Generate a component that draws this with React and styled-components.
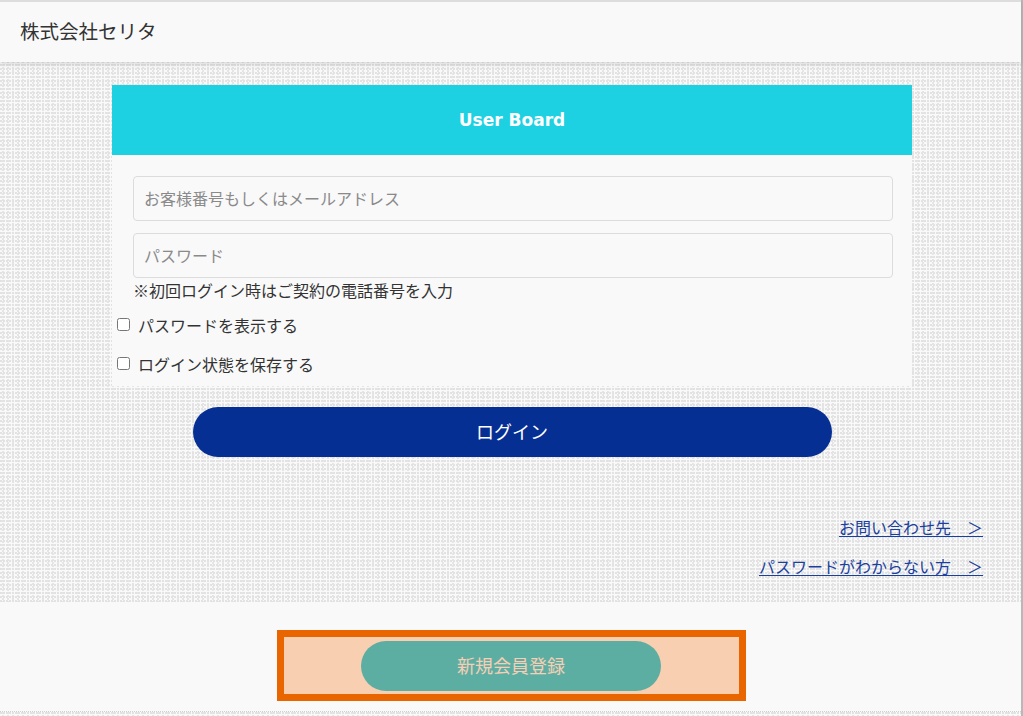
import React from "react";
import styled, { createGlobalStyle } from "styled-components";

const GlobalStyle = createGlobalStyle`
  * { box-sizing: border-box; }
  html, body { margin: 0; padding: 0; }
  body {
    background-color: #f9f9f9;
    font-family: "Noto Sans CJK JP", "Noto Sans", sans-serif;
    color: #333;
  }
`;

const Page = styled.div`
  position: relative;
  min-height: 716px;
  background-color: #f9f9f9;
  background-image:
    radial-gradient(circle at 1px 1px, #e2e2e2 0.8px, transparent 1px),
    radial-gradient(circle at 1px 1px, #e5e5e5 0.8px, transparent 1px);
  background-size: 3px 4px, 5px 3px;
  background-position: 0 0, 2px 1px;
  box-shadow: inset -2px 0 0 #b8b8b8;
`;

const Header = styled.header`
  position: relative;
  z-index: 1;
  height: 62px;
  border-top: 2px solid #dddddd;
  background: #f9f9f9;
  box-shadow: 0 2px 5px rgba(0, 0, 0, 0.14);
  display: flex;
  align-items: center;
  padding: 0 0 4px 20px;
  font-size: 19.5px;
  color: #333;
  margin-right: 2px;
`;

const Main = styled.main`
  padding: 23px 0 24px 1px;
`;

const Card = styled.section`
  width: 800px;
  margin: 0 auto;
  background: #f9f9f9;
`;

const CardHead = styled.div`
  height: 70px;
  background: #1dd1e3;
  display: flex;
  align-items: center;
  justify-content: center;
  font-family: "DejaVu Sans", Verdana, sans-serif;
  font-weight: bold;
  font-size: 17px;
  color: #ffffff;
`;

const CardBody = styled.div`
  padding: 21px 0 3px;
`;

const Fields = styled.div`
  padding: 0 19px 0 21px;
  display: flex;
  flex-direction: column;
  gap: 12px;
`;

const Input = styled.input`
  height: 45px;
  width: 100%;
  border: 1px solid #dcdcdc;
  border-radius: 4px;
  background: #f9f9f9;
  padding: 0 10px 2px;
  font-family: "Noto Sans CJK JP", sans-serif;
  font-size: 16px;
  color: #333;
  outline: none;
  &::placeholder { color: #8a8a8a; }
`;

const Note = styled.p`
  margin: 0 21px;
  font-size: 16px;
  line-height: 24px;
  color: #333;
`;

const CheckList = styled.div`
  margin-top: 3px;
`;

const CheckRow = styled.label`
  height: 39px;
  display: flex;
  align-items: center;
  gap: 8px;
  padding-left: 5px;
  font-size: 16px;
  color: #333;
`;

const Check = styled.input`
  margin: 0;
  width: 13px;
  height: 13px;
`;

const PillButton = styled.button`
  display: flex;
  align-items: center;
  justify-content: center;
  width: ${(p) => p.$w}px;
  height: 50px;
  border: none;
  border-radius: 25px;
  background: ${(p) => p.$bg};
  color: ${(p) => p.$fg};
  font-family: "Noto Sans CJK JP", sans-serif;
  font-size: 18px;
  padding: 0 0 2px;
  cursor: pointer;
`;

const LoginWrap = styled.div`
  display: flex;
  justify-content: center;
  margin-top: 21px;
`;

const Links = styled.nav`
  margin-top: 58px;
  padding-right: 40px;
  display: flex;
  flex-direction: column;
  align-items: flex-end;
  gap: 15px;
`;

const Link = styled.a`
  font-size: 16px;
  line-height: 24px;
  color: #1b3f9e;
  text-decoration: underline;
  text-underline-offset: 2px;
`;

const Footer = styled.div`
  height: 110px;
  padding: 28px 0 0 1px;
  background: #f9f9f9;
  border-bottom: 1px dotted #cfcfcf;
  margin-right: 2px;
`;

const Highlight = styled.div`
  width: 469px;
  margin: 0 auto;
  border: 7px solid #e86500;
  background: #f8cfb0;
  padding: 4px 0 3px;
  display: flex;
  justify-content: center;
`;

export default function App() {
  return (
    <>
      <GlobalStyle />
      <Page>
        <Header>株式会社セリタ</Header>
        <Main>
          <Card>
            <CardHead>User Board</CardHead>
            <CardBody>
              <Fields>
                <Input type="text" placeholder="お客様番号もしくはメールアドレス" />
                <Input type="password" placeholder="パスワード" />
              </Fields>
              <Note>※初回ログイン時はご契約の電話番号を入力</Note>
              <CheckList>
                <CheckRow>
                  <Check type="checkbox" />
                  パスワードを表示する
                </CheckRow>
                <CheckRow>
                  <Check type="checkbox" />
                  ログイン状態を保存する
                </CheckRow>
              </CheckList>
            </CardBody>
          </Card>
          <LoginWrap>
            <PillButton $w={639} $bg="#062f93" $fg="#ffffff">ログイン</PillButton>
          </LoginWrap>
          <Links>
            <Link href="#">お問い合わせ先　＞</Link>
            <Link href="#">パスワードがわからない方　＞</Link>
          </Links>
        </Main>
        <Footer>
          <Highlight>
            <PillButton $w={300} $bg="#5daea2" $fg="#f6cfb6">新規会員登録</PillButton>
          </Highlight>
        </Footer>
      </Page>
    </>
  );
}
